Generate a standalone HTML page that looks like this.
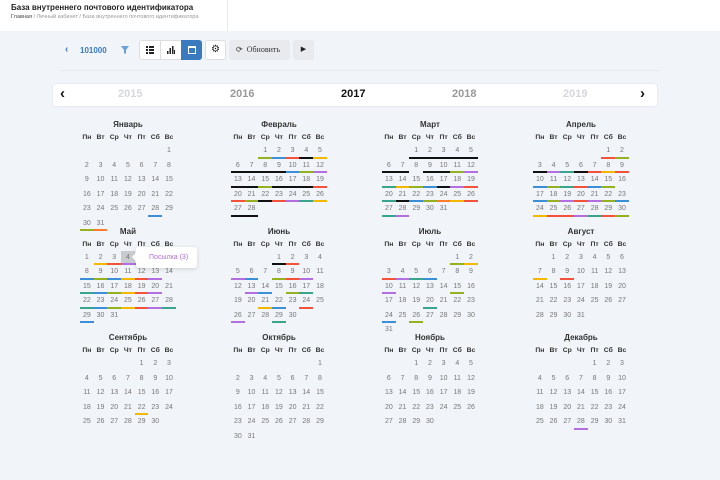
<!DOCTYPE html>
<html><head><meta charset="utf-8">
<style>
*{margin:0;padding:0;box-sizing:border-box}
body{width:720px;height:480px;background:#f1f4f9;font-family:"Liberation Sans",sans-serif;position:relative;overflow:hidden}
.top{position:absolute;left:0;top:0;width:720px;height:31px;background:#fff}
.top .sep{position:absolute;left:227px;top:0;width:1px;height:31px;background:#e6e9ee}
.t1{position:absolute;left:11px;top:3px;font-size:8px;font-weight:bold;color:#222}
.t2{position:absolute;left:11px;top:14px;font-size:5.5px;color:#999}
.t2 b{color:#444;font-weight:normal}
.tb{position:absolute;top:40px;height:20px;border-radius:3px;font-size:8px}
.yb{position:absolute;left:53px;top:84px;width:604px;height:22px;background:#fff;border-radius:3px;box-shadow:0 0 2px #dde}
.y{position:absolute;top:4px;font-size:11px;font-weight:bold;color:#999}
.m{position:absolute;width:96px}
.mt{height:12px;line-height:12px;text-align:center;font-size:8px;font-weight:bold;color:#333}
.wh{display:grid;grid-template-columns:repeat(7,13.7px);margin-top:1px;height:12px;line-height:11px;font-size:6.8px;font-weight:bold;color:#333;text-align:center}
.wh i{font-style:normal}
.g{display:grid;grid-template-columns:repeat(7,13.7px);margin-top:0}
.g span{height:14.5px;line-height:13px;font-size:7px;color:#777;text-align:center;border-bottom:2px solid transparent}
.b{border-bottom-color:#3a8fd6!important}.r{border-bottom-color:#f4523b!important}.gr{border-bottom-color:#95b11f!important}
.yl{border-bottom-color:#f5b800!important}.p{border-bottom-color:#b36ee0!important}.t{border-bottom-color:#3aa58d!important}
.k{border-bottom-color:#111!important}.o{border-bottom-color:#ff7a2f!important}
</style></head><body>
<div class="top"><div class="sep"></div>
<div class="t1">База внутреннего почтового идентификатора</div>
<div class="t2"><b>Главная</b> / Личный кабинет / База внутреннего почтового идентификатора</div></div>

<div style="position:absolute;left:65px;top:44px;font-size:10px;font-weight:bold;color:#3a7abf">&#8249;</div>
<div style="position:absolute;left:80px;top:46px;font-size:8px;font-weight:bold;color:#3a7abf">101000</div>
<svg style="position:absolute;left:121px;top:46px" width="8" height="8"><path d="M0 0H8L5 4V8L3 7V4Z" fill="#6aa0d8"/></svg>
<div class="tb" style="left:139px;width:63px;background:#fff;border:1px solid #ddd"></div>
<div class="tb" style="left:181px;width:21px;background:#3a7abf;border-radius:0 3px 3px 0"></div>
<div style="position:absolute;left:160px;top:41px;width:1px;height:18px;background:#ddd"></div>
<svg style="position:absolute;left:146px;top:46px" width="8" height="8"><path d="M0 0h2v2h-2zM3 0h5v2h-5zM0 3h2v2h-2zM3 3h5v2h-5zM0 6h2v2h-2zM3 6h5v2h-5z" fill="#222"/></svg>
<svg style="position:absolute;left:167px;top:46px" width="8" height="8"><path d="M0 5h1.5v3h-1.5zM2.5 2h1.5v6h-1.5zM5 0h1.5v8h-1.5zM7 4h1v4h-1z" fill="#222"/></svg>
<svg style="position:absolute;left:188px;top:45px" width="8" height="9"><rect x="0" y="1" width="8" height="8" fill="#fff"/><rect x="1" y="3" width="6" height="5" fill="#3a7abf"/></svg>
<div class="tb" style="left:205px;width:21px;background:#fff;border:1px solid #ddd;text-align:center;line-height:18px;font-size:10px;color:#222">&#9881;</div>
<div class="tb" style="left:229px;width:61px;background:#e8eaee;font-family:'Liberation Serif',serif;color:#333;line-height:20px;padding-left:7px"><span style="font-family:'DejaVu Sans';font-size:8px">&#10227;</span>&nbsp; Обновить</div>
<div class="tb" style="left:293px;width:21px;background:#e8eaee;text-align:center;line-height:20px;font-size:7px;color:#222">&#9654;</div>
<div style="position:absolute;left:60px;top:70px;width:600px;height:1px;background:#e6e9ee"></div>

<div class="yb">
<div style="position:absolute;left:7px;top:1px;font-size:15px;font-weight:bold;color:#111">&#8249;</div>
<div class="y" style="left:65px;color:#d4d7dc">2015</div>
<div class="y" style="left:177px">2016</div>
<div class="y" style="left:288px;color:#111">2017</div>
<div class="y" style="left:399px">2018</div>
<div class="y" style="left:510px;color:#d4d7dc">2019</div>
<div style="position:absolute;left:587px;top:1px;font-size:15px;font-weight:bold;color:#111">&#8250;</div>
</div>

<div class="m" style="left:80px;top:119px"><div class="mt">Январь</div><div class="wh"><i>Пн</i><i>Вт</i><i>Ср</i><i>Чт</i><i>Пт</i><i>Сб</i><i>Вс</i></div>
<div class="g"><span style="grid-column-start:7">1</span><span>2</span><span>3</span><span>4</span><span>5</span><span>6</span><span>7</span><span>8</span><span>9</span><span>10</span><span>11</span><span>12</span><span>13</span><span>14</span><span>15</span><span>16</span><span>17</span><span>18</span><span>19</span><span>20</span><span>21</span><span>22</span><span>23</span><span>24</span><span>25</span><span>26</span><span>27</span><span class="b">28</span><span>29</span><span class="gr">30</span><span class="o">31</span></div></div>

<div class="m" style="left:231px;top:119px"><div class="mt">Февраль</div><div class="wh"><i>Пн</i><i>Вт</i><i>Ср</i><i>Чт</i><i>Пт</i><i>Сб</i><i>Вс</i></div>
<div class="g"><span style="grid-column-start:3" class="gr">1</span><span class="b">2</span><span class="r">3</span><span class="k">4</span><span class="yl">5</span><span class="k">6</span><span class="k">7</span><span class="k">8</span><span class="k">9</span><span class="b">10</span><span class="gr">11</span><span class="p">12</span><span class="k">13</span><span class="k">14</span><span class="gr">15</span><span class="k">16</span><span class="k">17</span><span class="k">18</span><span class="r">19</span><span class="r">20</span><span class="gr">21</span><span class="k">22</span><span class="r">23</span><span class="p">24</span><span class="t">25</span><span class="yl">26</span><span class="k">27</span><span class="k">28</span></div></div>

<div class="m" style="left:382px;top:119px"><div class="mt">Март</div><div class="wh"><i>Пн</i><i>Вт</i><i>Ср</i><i>Чт</i><i>Пт</i><i>Сб</i><i>Вс</i></div>
<div class="g"><span style="grid-column-start:3" class="k">1</span><span class="k">2</span><span class="k">3</span><span class="k">4</span><span class="k">5</span><span class="k">6</span><span class="k">7</span><span>8</span><span class="k">9</span><span class="k">10</span><span class="gr">11</span><span class="p">12</span><span class="t">13</span><span class="yl">14</span><span class="gr">15</span><span class="b">16</span><span class="k">17</span><span class="p">18</span><span class="r">19</span><span class="t">20</span><span class="k">21</span><span class="b">22</span><span class="gr">23</span><span class="o">24</span><span class="yl">25</span><span class="r">26</span><span class="t">27</span><span class="p">28</span><span>29</span><span>30</span><span>31</span></div></div>

<div class="m" style="left:533px;top:119px"><div class="mt">Апрель</div><div class="wh"><i>Пн</i><i>Вт</i><i>Ср</i><i>Чт</i><i>Пт</i><i>Сб</i><i>Вс</i></div>
<div class="g"><span style="grid-column-start:6" class="r">1</span><span class="gr">2</span><span class="k">3</span><span class="p">4</span><span class="t">5</span><span class="k">6</span><span class="r">7</span><span class="yl">8</span><span class="r">9</span><span class="b">10</span><span class="gr">11</span><span class="t">12</span><span class="r">13</span><span class="b">14</span><span class="gr">15</span><span>16</span><span class="b">17</span><span class="gr">18</span><span class="p">19</span><span class="r">20</span><span class="p">21</span><span class="gr">22</span><span class="b">23</span><span class="yl">24</span><span class="r">25</span><span class="r">26</span><span class="p">27</span><span class="t">28</span><span class="r">29</span><span class="gr">30</span></div></div>

<div class="m" style="left:80px;top:225.5px"><div class="mt">Май</div><div class="wh"><i>Пн</i><i>Вт</i><i>Ср</i><i>Чт</i><i>Пт</i><i>Сб</i><i>Вс</i></div>
<div class="g"><span>1</span><span class="yl">2</span><span class="r">3</span><span class="p" style="background:#c9cbce">4</span><span class="t">5</span><span>6</span><span>7</span><span class="b">8</span><span class="gr">9</span><span class="b">10</span><span class="yl">11</span><span class="r">12</span><span class="p">13</span><span>14</span><span class="t">15</span><span class="b">16</span><span class="gr">17</span><span class="yl">18</span><span class="r">19</span><span class="p">20</span><span>21</span><span class="t">22</span><span class="b">23</span><span class="gr">24</span><span class="yl">25</span><span class="r">26</span><span class="p">27</span><span class="t">28</span><span class="b">29</span><span>30</span><span>31</span></div></div>
<div style="position:absolute;left:136px;top:247px;width:61px;height:21px;background:#fff;border-radius:3px;box-shadow:0 1px 4px rgba(0,0,0,.15);font-size:7px;color:#b36ee0;line-height:21px;padding-left:13px">Посылка (3)</div>
<div style="position:absolute;left:133px;top:254px;width:6px;height:6px;background:#fff;transform:rotate(45deg)"></div>

<div class="m" style="left:231px;top:225.5px"><div class="mt">Июнь</div><div class="wh"><i>Пн</i><i>Вт</i><i>Ср</i><i>Чт</i><i>Пт</i><i>Сб</i><i>Вс</i></div>
<div class="g"><span style="grid-column-start:4" class="k">1</span><span class="r">2</span><span>3</span><span>4</span><span class="p">5</span><span class="b">6</span><span>7</span><span class="gr">8</span><span class="r">9</span><span class="p">10</span><span>11</span><span>12</span><span class="p">13</span><span class="b">14</span><span>15</span><span class="gr">16</span><span class="t">17</span><span>18</span><span>19</span><span>20</span><span class="yl">21</span><span class="b">22</span><span>23</span><span class="r">24</span><span>25</span><span class="p">26</span><span>27</span><span>28</span><span class="t">29</span><span>30</span></div></div>

<div class="m" style="left:382px;top:225.5px"><div class="mt">Июль</div><div class="wh"><i>Пн</i><i>Вт</i><i>Ср</i><i>Чт</i><i>Пт</i><i>Сб</i><i>Вс</i></div>
<div class="g"><span style="grid-column-start:6" class="gr">1</span><span class="yl">2</span><span class="r">3</span><span class="p">4</span><span class="t">5</span><span class="b">6</span><span>7</span><span>8</span><span>9</span><span class="p">10</span><span>11</span><span>12</span><span>13</span><span>14</span><span class="gr">15</span><span>16</span><span>17</span><span>18</span><span>19</span><span class="t">20</span><span>21</span><span>22</span><span>23</span><span class="b">24</span><span>25</span><span class="gr">26</span><span>27</span><span>28</span><span>29</span><span>30</span><span>31</span></div></div>

<div class="m" style="left:533px;top:225.5px"><div class="mt">Август</div><div class="wh"><i>Пн</i><i>Вт</i><i>Ср</i><i>Чт</i><i>Пт</i><i>Сб</i><i>Вс</i></div>
<div class="g"><span style="grid-column-start:2">1</span><span>2</span><span>3</span><span>4</span><span>5</span><span>6</span><span class="yl">7</span><span>8</span><span class="r">9</span><span>10</span><span>11</span><span>12</span><span>13</span><span>14</span><span>15</span><span>16</span><span>17</span><span>18</span><span>19</span><span>20</span><span>21</span><span>22</span><span>23</span><span>24</span><span>25</span><span>26</span><span>27</span><span>28</span><span>29</span><span>30</span><span>31</span></div></div>

<div class="m" style="left:80px;top:332px"><div class="mt">Сентябрь</div><div class="wh"><i>Пн</i><i>Вт</i><i>Ср</i><i>Чт</i><i>Пт</i><i>Сб</i><i>Вс</i></div>
<div class="g"><span style="grid-column-start:5">1</span><span>2</span><span>3</span><span>4</span><span>5</span><span>6</span><span>7</span><span>8</span><span>9</span><span>10</span><span>11</span><span>12</span><span>13</span><span>14</span><span>15</span><span>16</span><span>17</span><span>18</span><span>19</span><span>20</span><span>21</span><span class="yl">22</span><span>23</span><span>24</span><span>25</span><span>26</span><span>27</span><span>28</span><span>29</span><span>30</span></div></div>

<div class="m" style="left:231px;top:332px"><div class="mt">Октябрь</div><div class="wh"><i>Пн</i><i>Вт</i><i>Ср</i><i>Чт</i><i>Пт</i><i>Сб</i><i>Вс</i></div>
<div class="g"><span style="grid-column-start:7">1</span><span>2</span><span>3</span><span>4</span><span>5</span><span>6</span><span>7</span><span>8</span><span>9</span><span>10</span><span>11</span><span>12</span><span>13</span><span>14</span><span>15</span><span>16</span><span>17</span><span>18</span><span>19</span><span>20</span><span>21</span><span>22</span><span>23</span><span>24</span><span>25</span><span>26</span><span>27</span><span>28</span><span>29</span><span>30</span><span>31</span></div></div>

<div class="m" style="left:382px;top:332px"><div class="mt">Ноябрь</div><div class="wh"><i>Пн</i><i>Вт</i><i>Ср</i><i>Чт</i><i>Пт</i><i>Сб</i><i>Вс</i></div>
<div class="g"><span style="grid-column-start:3">1</span><span>2</span><span>3</span><span>4</span><span>5</span><span>6</span><span>7</span><span>8</span><span>9</span><span>10</span><span>11</span><span>12</span><span>13</span><span>14</span><span>15</span><span>16</span><span>17</span><span>18</span><span>19</span><span>20</span><span>21</span><span>22</span><span>23</span><span>24</span><span>25</span><span>26</span><span>27</span><span>28</span><span>29</span><span>30</span></div></div>

<div class="m" style="left:533px;top:332px"><div class="mt">Декабрь</div><div class="wh"><i>Пн</i><i>Вт</i><i>Ср</i><i>Чт</i><i>Пт</i><i>Сб</i><i>Вс</i></div>
<div class="g"><span style="grid-column-start:5">1</span><span>2</span><span>3</span><span>4</span><span>5</span><span>6</span><span>7</span><span>8</span><span>9</span><span>10</span><span>11</span><span>12</span><span>13</span><span>14</span><span>15</span><span>16</span><span>17</span><span>18</span><span>19</span><span>20</span><span>21</span><span>22</span><span>23</span><span>24</span><span>25</span><span>26</span><span>27</span><span class="p">28</span><span>29</span><span>30</span><span>31</span></div></div>
</body></html>
